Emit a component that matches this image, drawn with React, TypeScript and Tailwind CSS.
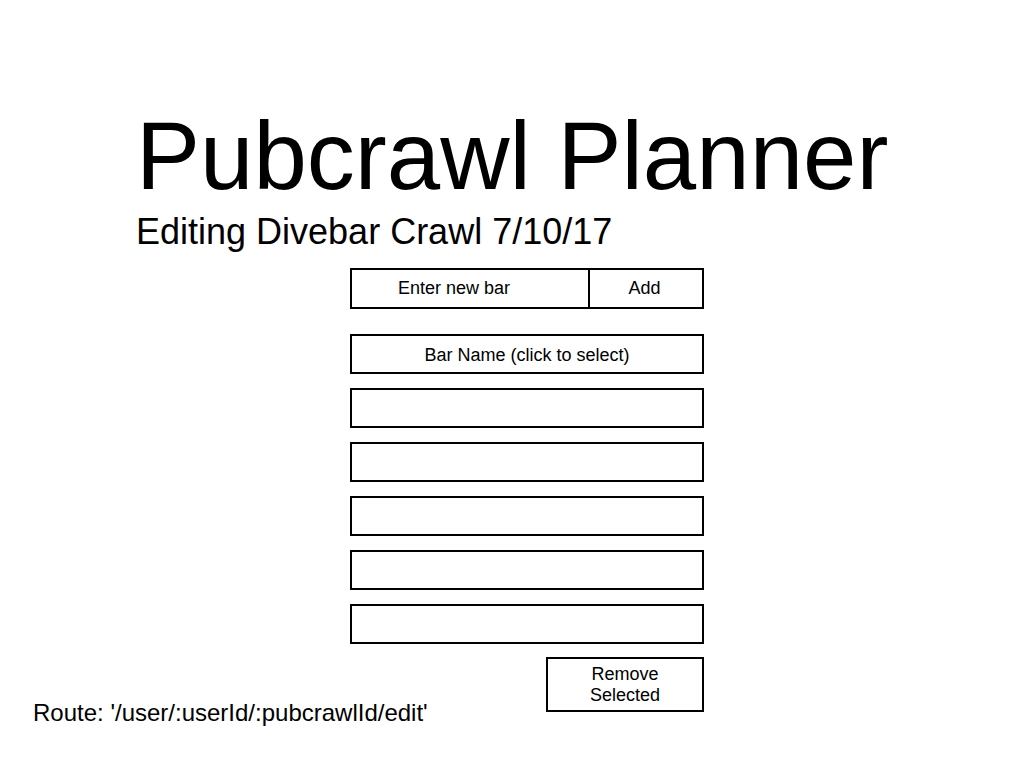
import React from 'react';

const bars = ['Bar Name (click to select)', '', '', '', '', ''];

export default function App() {
  return (
    <div className="w-[1024px] h-[768px] bg-white text-black font-['Liberation_Sans',Arial,sans-serif] overflow-hidden">
      <div className="pt-[108px] pl-[136px]">
        <h1 className="text-[96px] leading-none">Pubcrawl Planner</h1>
        <p className="mt-[10px] text-[36px] leading-none">Editing Divebar Crawl 7/10/17</p>
      </div>

      <div className="ml-[350px] w-[354px] mt-[18px]">
        <div className="flex h-[41px] border-2 border-black text-[18px]">
          <input
            className="flex-1 min-w-0 pl-[46px] outline-none placeholder:text-black"
            placeholder="Enter new bar"
          />
          <button className="w-[114px] pr-[3px] border-l-2 border-black">Add</button>
        </div>

        <ul className="mt-[25px] flex flex-col gap-[14px]">
          {bars.map((bar, i) => (
            <li
              key={i}
              className="h-[40px] pt-[3px] border-2 border-black flex items-center justify-center text-[18px]"
            >
              {bar}
            </li>
          ))}
        </ul>
      </div>

      <div className="flex items-start mt-[13px]">
        <div className="w-[546px] pl-[33px] pt-[44px] text-[24px] leading-none">
          Route: '/user/:userId/:pubcrawlId/edit'
        </div>
        <button className="w-[158px] h-[55px] border-2 border-black text-[18px] leading-[21px]">
          Remove
          <br />
          Selected
        </button>
      </div>
    </div>
  );
}
